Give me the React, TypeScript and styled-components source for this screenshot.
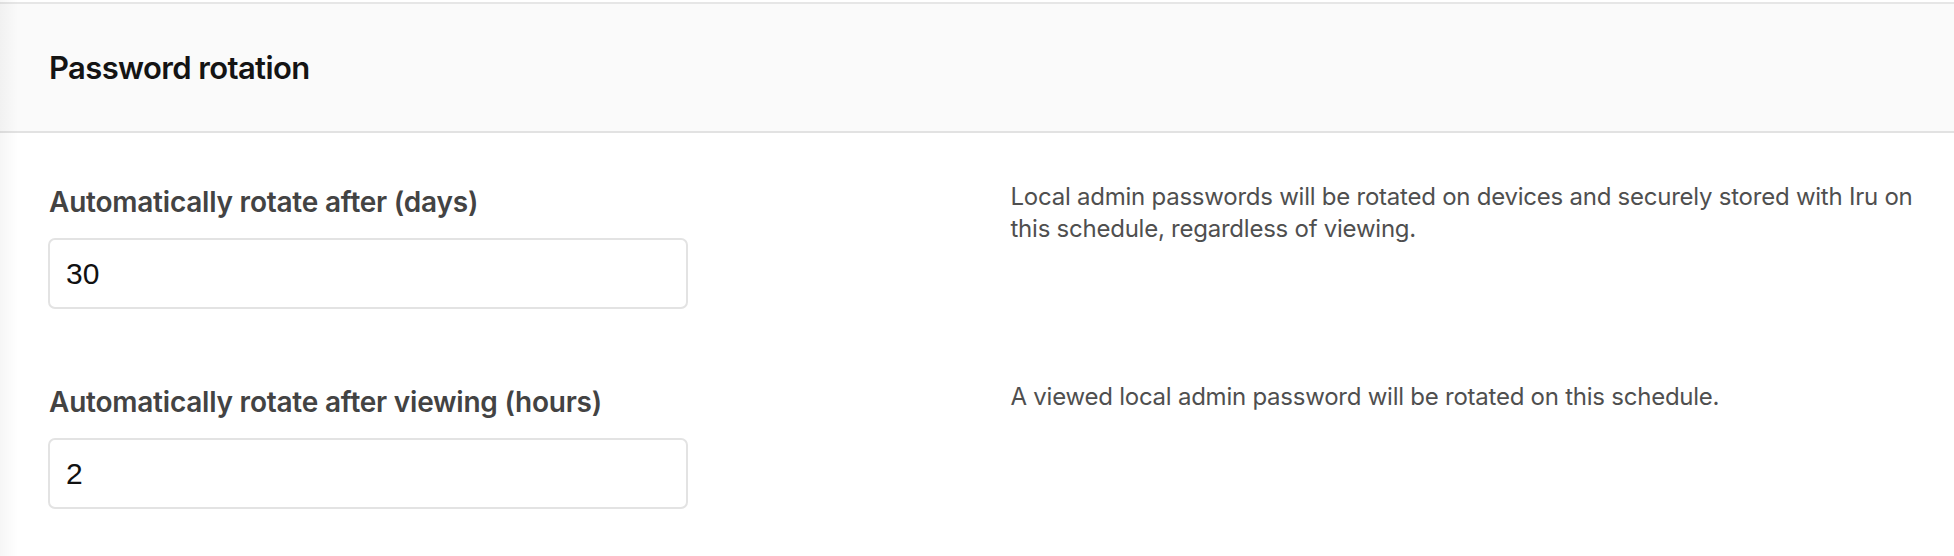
import React from "react";
import styled, { createGlobalStyle } from "styled-components";

const GlobalStyle = createGlobalStyle`
  html, body {
    margin: 0;
    padding: 0;
    background: #ffffff;
  }
  * { box-sizing: border-box; }
`;

const Page = styled.div`
  position: relative;
  width: 100%;
  min-height: 556px;
  padding-top: 2px;
  background: #ffffff;
  font-family: Inter, "Liberation Sans", sans-serif;

  &::before {
    content: "";
    position: absolute;
    left: 0;
    top: 0;
    bottom: 0;
    width: 18px;
    pointer-events: none;
    background: linear-gradient(to right, rgba(0, 0, 0, 0.035), rgba(0, 0, 0, 0));
  }
`;

const Header = styled.header`
  display: flex;
  align-items: center;
  height: 131px;
  padding: 0 49px;
  background: #fafafa;
  border-top: 2px solid #e6e6e6;
  border-bottom: 2px solid #e2e2e2;
`;

const Title = styled.h2`
  margin: 0;
  font-size: 31px;
  font-weight: 600;
  letter-spacing: -0.02em;
  color: #141414;
`;

const Body = styled.div`
  display: flex;
  flex-direction: column;
  gap: 72px;
  padding: 48px 34px 0 49px;
`;

const Row = styled.div`
  display: grid;
  grid-template-columns: minmax(0, 1fr) minmax(0, 1fr);
  column-gap: 52px;
  align-items: start;
`;

const Field = styled.div`
  display: flex;
  flex-direction: column;
  gap: 15px;
`;

const Label = styled.label`
  font-size: 28px;
  line-height: 42px;
  font-weight: 600;
  letter-spacing: -0.008em;
  color: #434343;
`;

const Input = styled.input`
  width: 640px;
  height: 71px;
  margin-left: -1px;
  padding: 0 16px;
  border: 2px solid #e3e3e3;
  border-radius: 7px;
  background: #ffffff;
  font-family: "Liberation Sans", Arial, sans-serif;
  font-size: 30px;
  color: #111111;
  outline: none;
`;

const Description = styled.p`
  margin: 0;
  font-size: 24px;
  line-height: 32px;
  font-weight: 400;
  letter-spacing: -0.01em;
  color: #4f4f4f;
`;

const settings = [
  {
    label: "Automatically rotate after (days)",
    value: "30",
    description:
      "Local admin passwords will be rotated on devices and securely stored with Iru on this schedule, regardless of viewing.",
  },
  {
    label: "Automatically rotate after viewing (hours)",
    value: "2",
    description: "A viewed local admin password will be rotated on this schedule.",
  },
];

export default function App() {
  return (
    <>
      <GlobalStyle />
      <Page>
        <Header>
          <Title>Password rotation</Title>
        </Header>
        <Body>
          {settings.map((s) => (
            <Row key={s.label}>
              <Field>
                <Label>{s.label}</Label>
                <Input type="text" defaultValue={s.value} />
              </Field>
              <Description>{s.description}</Description>
            </Row>
          ))}
        </Body>
      </Page>
    </>
  );
}
